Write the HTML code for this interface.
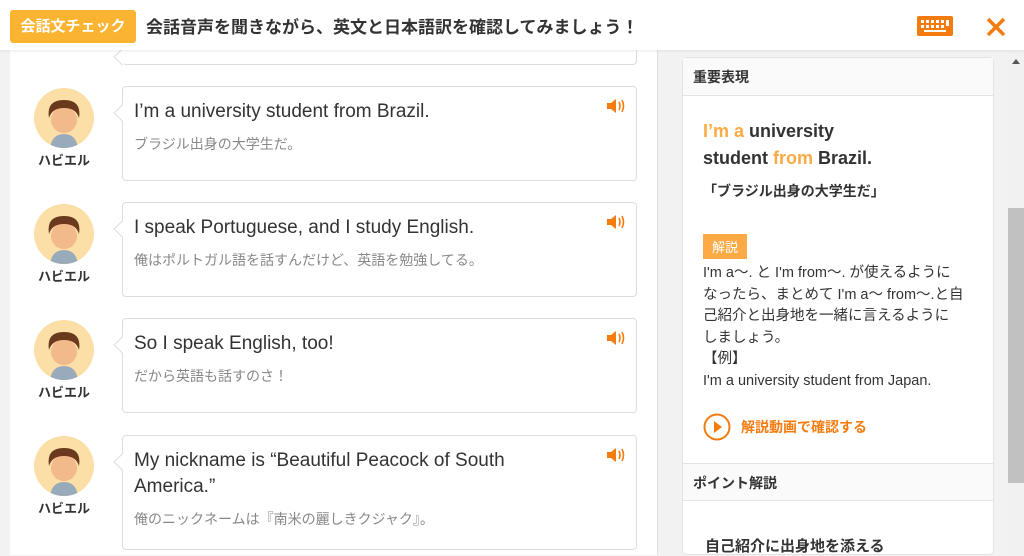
<!DOCTYPE html>
<html><head><meta charset="utf-8"><style>
*{margin:0;padding:0;box-sizing:border-box}
body{width:1024px;height:555px;overflow:hidden;background:#f2f2f2;font-family:"Liberation Sans","Noto Sans CJK JP",sans-serif;position:relative}
.hdr{position:absolute;left:0;top:0;width:1024px;height:50px;background:#fff;box-shadow:0 1px 3px rgba(0,0,0,.08);z-index:5}
.tag{position:absolute;left:10px;top:10px;width:126px;height:33px;background:#fbb432;border-radius:3px;color:#fff;font-weight:bold;font-size:15px;line-height:33px;text-align:center}
.ttl{position:absolute;left:146px;top:13px;font-size:17px;font-weight:bold;color:#333}
.main{position:absolute;left:10px;top:50px;width:648px;height:505px;background:#fff;border-right:1px solid #ddd}
.card{position:absolute;left:122px;width:515px;background:#fff;border:1px solid #ddd;border-radius:4px;padding:12px 11px}
.card .en{font-size:19px;color:#333;line-height:26px;width:410px}
.card .jp{font-size:14px;color:#888;margin-top:9px}
.card:before{content:"";position:absolute;left:-7px;top:20px;width:11px;height:11px;background:#fff;border-left:1px solid #ddd;border-bottom:1px solid #ddd;transform:rotate(45deg)}
.spk{position:absolute;right:10px;top:10px}
.av{position:absolute;left:34px;width:60px;height:60px;border-radius:50%;background:#fcdfa6;overflow:hidden}
.nm{position:absolute;left:38px;width:52px;text-align:center;font-size:13px;font-weight:bold;color:#333}
.rp{position:absolute;left:682px;top:57px;width:312px;height:498px;background:#fff;border:1px solid #e3e3e3;border-radius:5px}
.sh{background:#fafafa;border-bottom:1px solid #e3e3e3;height:38px;line-height:38px;padding-left:10px;font-size:14px;font-weight:bold;color:#333}
.sb{position:absolute;left:1008px;top:50px;width:16px;height:505px;background:#f1f1f1}
</style></head><body>
<div class="hdr">
<div class="tag">会話文チェック</div>
<div class="ttl">会話音声を聞きながら、英文と日本語訳を確認してみましょう！</div>
<svg style="position:absolute;left:917px;top:16px" width="36" height="20"><rect x="0" y="0" width="36" height="20" rx="2" fill="#f47c0e"/><g fill="#fff"><rect x="4" y="4" width="3" height="3"/><rect x="9" y="4" width="3" height="3"/><rect x="14" y="4" width="3" height="3"/><rect x="19" y="4" width="3" height="3"/><rect x="24" y="4" width="3" height="3"/><rect x="29" y="4" width="3" height="6"/><rect x="4" y="9" width="3" height="3"/><rect x="9" y="9" width="3" height="3"/><rect x="14" y="9" width="3" height="3"/><rect x="19" y="9" width="3" height="3"/><rect x="24" y="9" width="3" height="3"/><rect x="7" y="14" width="22" height="2"/></g></svg>
<svg style="position:absolute;left:986px;top:17px" width="20" height="20"><path d="M2 2L18 18M18 2L2 18" stroke="#f47c0e" stroke-width="3.5"/></svg>
</div>
<div class="main"></div>
<div class="card" style="top:30px;height:35px"></div>

<div class="av" style="top:88px"><svg width="60" height="60"><circle cx="30" cy="32" r="13" fill="#f2b98a"/><path d="M15 30Q12 12 30 12Q48 12 45 30Q42 20 30 20Q18 20 15 30Z" fill="#6b3a1e"/><path d="M16 60Q18 46 30 46Q42 46 44 60Z" fill="#9ab"/></svg></div>
<div class="nm" style="top:150px">ハビエル</div>
<div class="card" style="top:86px;height:95px"><div class="en">I’m a university student from Brazil.</div><div class="jp">ブラジル出身の大学生だ。</div><svg class="spk" width="20" height="18"><path d="M1 6h4l5-4v14l-5-4H1z" fill="#f47c0e"/><path d="M13 5q2 4 0 8M16 3q3 6 0 12" stroke="#f47c0e" stroke-width="1.6" fill="none"/></svg></div>

<div class="av" style="top:204px"><svg width="60" height="60"><circle cx="30" cy="32" r="13" fill="#f2b98a"/><path d="M15 30Q12 12 30 12Q48 12 45 30Q42 20 30 20Q18 20 15 30Z" fill="#6b3a1e"/><path d="M16 60Q18 46 30 46Q42 46 44 60Z" fill="#9ab"/></svg></div>
<div class="nm" style="top:266px">ハビエル</div>
<div class="card" style="top:202px;height:95px"><div class="en">I speak Portuguese, and I study English.</div><div class="jp">俺はポルトガル語を話すんだけど、英語を勉強してる。</div><svg class="spk" width="20" height="18"><path d="M1 6h4l5-4v14l-5-4H1z" fill="#f47c0e"/><path d="M13 5q2 4 0 8M16 3q3 6 0 12" stroke="#f47c0e" stroke-width="1.6" fill="none"/></svg></div>

<div class="av" style="top:320px"><svg width="60" height="60"><circle cx="30" cy="32" r="13" fill="#f2b98a"/><path d="M15 30Q12 12 30 12Q48 12 45 30Q42 20 30 20Q18 20 15 30Z" fill="#6b3a1e"/><path d="M16 60Q18 46 30 46Q42 46 44 60Z" fill="#9ab"/></svg></div>
<div class="nm" style="top:382px">ハビエル</div>
<div class="card" style="top:318px;height:95px"><div class="en">So I speak English, too!</div><div class="jp">だから英語も話すのさ！</div><svg class="spk" width="20" height="18"><path d="M1 6h4l5-4v14l-5-4H1z" fill="#f47c0e"/><path d="M13 5q2 4 0 8M16 3q3 6 0 12" stroke="#f47c0e" stroke-width="1.6" fill="none"/></svg></div>

<div class="av" style="top:436px"><svg width="60" height="60"><circle cx="30" cy="32" r="13" fill="#f2b98a"/><path d="M15 30Q12 12 30 12Q48 12 45 30Q42 20 30 20Q18 20 15 30Z" fill="#6b3a1e"/><path d="M16 60Q18 46 30 46Q42 46 44 60Z" fill="#9ab"/></svg></div>
<div class="nm" style="top:498px">ハビエル</div>
<div class="card" style="top:435px;height:115px"><div class="en">My nickname is “Beautiful Peacock of South America.”</div><div class="jp">俺のニックネームは『南米の麗しきクジャク』。</div><svg class="spk" width="20" height="18"><path d="M1 6h4l5-4v14l-5-4H1z" fill="#f47c0e"/><path d="M13 5q2 4 0 8M16 3q3 6 0 12" stroke="#f47c0e" stroke-width="1.6" fill="none"/></svg></div>

<div class="rp">
<div class="sh">重要表現</div>
<div style="padding:22px 0 0 20px">
<div style="font-size:18px;font-weight:bold;line-height:27px;color:#333"><span style="color:#fbaa45">I’m a</span> university<br>student <span style="color:#fbaa45">from</span> Brazil.</div>
<div style="font-size:14px;font-weight:bold;color:#333;margin-top:9px">「ブラジル出身の大学生だ」</div>
<div style="margin-top:33px;display:inline-block;background:#fbaa45;color:#fff;font-size:13px;padding:3px 9px">解説</div>
<div style="font-size:14.5px;color:#333;line-height:21.5px;margin-top:4px;width:290px;white-space:nowrap">I'm a〜. と I'm from〜. が使えるように<br>なったら、まとめて I'm a〜 from〜.と自<br>己紹介と出身地を一緒に言えるように<br>しましょう。<br>【例】<br>I'm a university student from Japan.</div>
<div style="margin-top:21px;display:flex;align-items:center;color:#f47c0e;font-weight:bold;font-size:14px"><svg width="28" height="28" style="margin-right:10px"><circle cx="14" cy="14" r="12.5" stroke="#f47c0e" stroke-width="2" fill="none"/><path d="M11 8l8 6-8 6z" fill="#f47c0e"/></svg>解説動画で確認する</div>
</div>
<div class="sh" style="position:absolute;top:405px;left:0;right:0;border-top:1px solid #e3e3e3">ポイント解説</div>
<div style="position:absolute;top:477px;left:22px;font-size:15px;font-weight:bold;color:#333">自己紹介に出身地を添える</div>
</div>
<div class="sb"><div style="position:absolute;left:4px;top:9px;border:4px solid transparent;border-bottom:5px solid #555;border-top:0"></div><div style="position:absolute;left:0;top:158px;width:16px;height:275px;background:#c1c1c1"></div></div>
</body></html>
